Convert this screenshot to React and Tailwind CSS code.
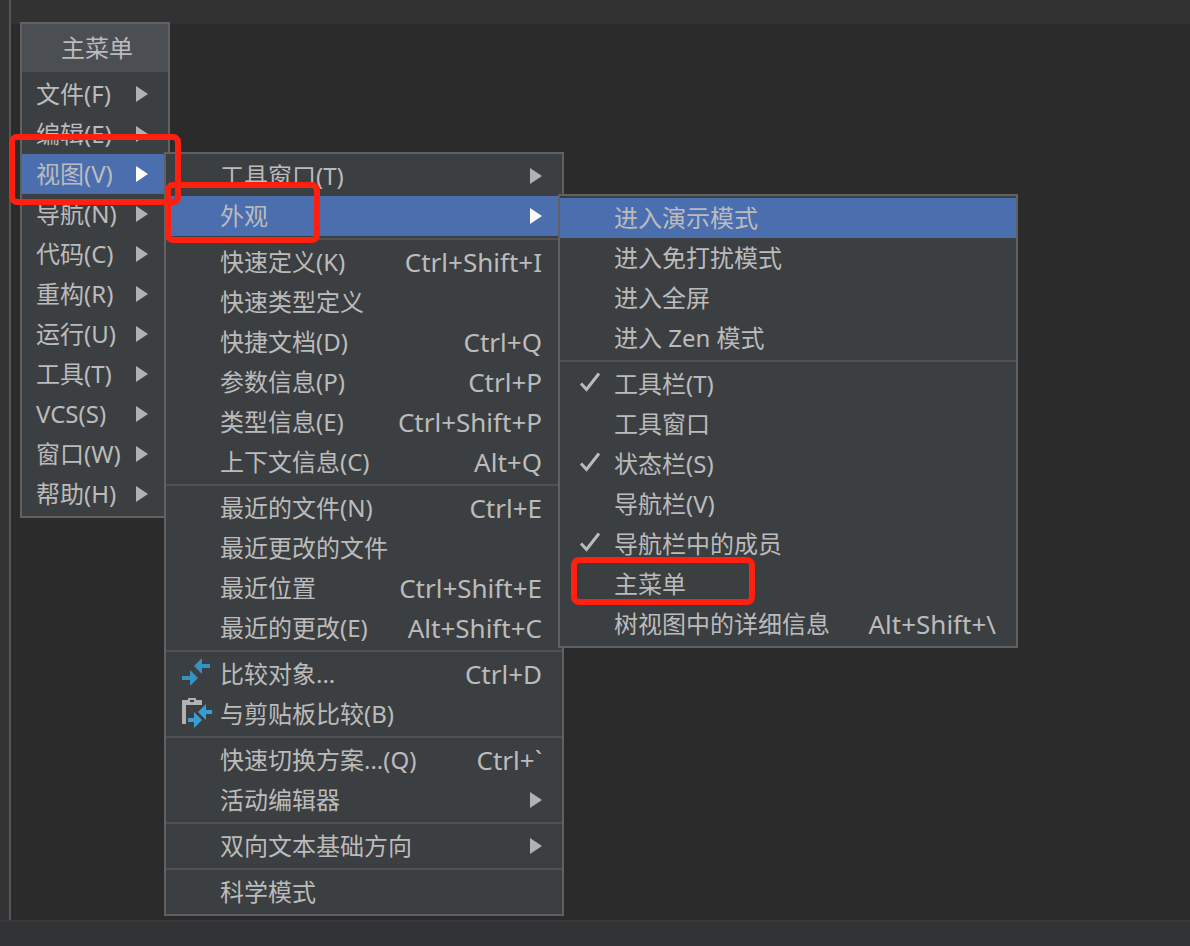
import React from 'react';
import clsx from 'clsx';

const mainItems = [
  { label: '文件(F)', sub: true },
  { label: '编辑(E)', sub: true },
  { label: '视图(V)', sub: true, active: true },
  { label: '导航(N)', sub: true },
  { label: '代码(C)', sub: true },
  { label: '重构(R)', sub: true },
  { label: '运行(U)', sub: true },
  { label: '工具(T)', sub: true },
  { label: 'VCS(S)', sub: true },
  { label: '窗口(W)', sub: true },
  { label: '帮助(H)', sub: true },
];

const viewGroups = [
  [
    { label: '工具窗口(T)', sub: true },
    { label: '外观', sub: true, active: true },
  ],
  [
    { label: '快速定义(K)', keys: 'Ctrl+Shift+I' },
    { label: '快速类型定义' },
    { label: '快捷文档(D)', keys: 'Ctrl+Q' },
    { label: '参数信息(P)', keys: 'Ctrl+P' },
    { label: '类型信息(E)', keys: 'Ctrl+Shift+P' },
    { label: '上下文信息(C)', keys: 'Alt+Q' },
  ],
  [
    { label: '最近的文件(N)', keys: 'Ctrl+E' },
    { label: '最近更改的文件' },
    { label: '最近位置', keys: 'Ctrl+Shift+E' },
    { label: '最近的更改(E)', keys: 'Alt+Shift+C' },
  ],
  [
    { label: '比较对象...', keys: 'Ctrl+D', icon: <DiffIcon /> },
    { label: '与剪贴板比较(B)', icon: <DiffClipboardIcon /> },
  ],
  [
    { label: '快速切换方案...(Q)', keys: 'Ctrl+`' },
    { label: '活动编辑器', sub: true },
  ],
  [{ label: '双向文本基础方向', sub: true }],
  [{ label: '科学模式' }],
];

const appearanceGroups = [
  [
    { label: '进入演示模式', active: true },
    { label: '进入免打扰模式' },
    { label: '进入全屏' },
    { label: '进入 Zen 模式' },
  ],
  [
    { label: '工具栏(T)', icon: <CheckIcon /> },
    { label: '工具窗口' },
    { label: '状态栏(S)', icon: <CheckIcon /> },
    { label: '导航栏(V)' },
    { label: '导航栏中的成员', icon: <CheckIcon /> },
    { label: '主菜单' },
    { label: '树视图中的详细信息', keys: 'Alt+Shift+\\' },
  ],
];

function DiffIcon() {
  return (
    <svg width="32" height="32" viewBox="0 0 32 32" fill="#3592C4" aria-hidden="true">
      <path d="M14 10L22 2V8H30V12H22V18Z" />
      <path d="M18 22L10 14V20H2V24H10V30Z" />
    </svg>
  );
}

function DiffClipboardIcon() {
  return (
    <svg width="32" height="32" viewBox="0 0 32 32" aria-hidden="true">
      <path fill="#AFB1B3" fillRule="evenodd" d="M8 2H16V4H22V9H6V28H2V4H8ZM10 4V6H14V4Z" />
      <path fill="#389FD6" d="M18 16L26 8V14H32V18H26V24Z" />
      <path fill="#389FD6" d="M22 24L14 16V22H8V26H14V32Z" />
    </svg>
  );
}

function CheckIcon() {
  return (
    <svg width="32" height="32" viewBox="0 0 32 32" fill="none" aria-hidden="true">
      <path d="M7 17.5L12.5 23.5L25 7.5" stroke="#BBBBBB" strokeWidth="3" />
    </svg>
  );
}

function Arrow({ active }) {
  return (
    <svg width="12" height="16" viewBox="0 0 12 16" fill={active ? '#FFFFFF' : '#AFB1B3'} aria-hidden="true">
      <path d="M0 0L12 8L0 16Z" />
    </svg>
  );
}

function MenuItem({ label, keys, sub, active, icon, gutter }) {
  return (
    <button
      type="button"
      className={clsx(
        'flex h-10 w-full items-center pr-5 text-left whitespace-nowrap',
        active && 'bg-[#4b6eaf]',
        !gutter && 'pl-[14px]'
      )}
    >
      {gutter && <span className="flex w-[54px] shrink-0 pl-[14px] pb-1">{icon}</span>}
      <span className="flex-1">{label}</span>
      {keys && <span className="text-[26px]">{keys}</span>}
      {sub && <Arrow active={active} />}
    </button>
  );
}

function Menu({ groups, gutter, title, className }) {
  return (
    <div className={clsx('absolute border-2 border-[#616161] bg-[#3c3f41]', className)}>
      {title && (
        <h1 className="flex h-12 items-center justify-center bg-[#4b4e52] pl-1">{title}</h1>
      )}
      <div className="py-0.5">
        {groups.map((items, i) => (
          <div key={i}>
            {i > 0 && <hr className="my-0.5 border-t-2 border-[#515151]" />}
            {items.map((item) => (
              <MenuItem key={item.label} gutter={gutter} {...item} />
            ))}
          </div>
        ))}
      </div>
    </div>
  );
}

function Marker({ className }) {
  return (
    <div className={clsx('pointer-events-none absolute rounded-lg border-6 border-[#ff2010]', className)} />
  );
}

export default function App() {
  return (
    <div className="relative flex min-h-screen flex-col bg-[#2b2b2b] font-['Noto_Sans','Noto_Sans_CJK_SC',sans-serif] text-2xl text-[#bbbbbb]">
      <div className="flex flex-1">
        <div className="w-[11px] border-r-2 border-[#555555] bg-[#313335]" />
        <div className="flex-1">
          <div className="h-6 bg-[#323232]" />
        </div>
      </div>
      <div className="h-[26px] border-t-2 border-[#3a3a3c] bg-[#313335]" />

      <Menu title="主菜单" groups={[mainItems]} className="top-[22px] left-5 w-[150px]" />
      <Menu gutter groups={viewGroups} className="top-[152px] left-[164px] w-[400px]" />
      <Menu gutter groups={appearanceGroups} className="top-[194px] left-[558px] w-[460px]" />

      <Marker className="top-[134px] left-[9px] h-[71px] w-[172px]" />
      <Marker className="top-[182px] left-[165px] h-[61px] w-[155px]" />
      <Marker className="top-[557px] left-[571px] h-[48px] w-[184px]" />
    </div>
  );
}
